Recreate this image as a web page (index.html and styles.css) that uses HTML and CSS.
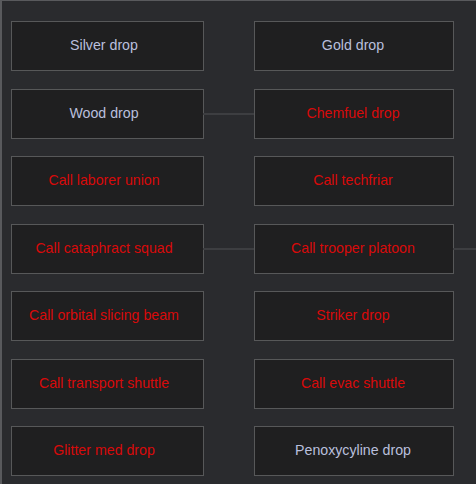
FILE: index.html
```html
<!DOCTYPE html>
<html>
<head>
<meta charset="utf-8">
<link rel="stylesheet" href="styles.css">
</head>
<body>
<div class="panel">
  <div class="grid">
    <div class="card silver">Silver drop</div>
    <div class="card silver">Gold drop</div>
    <div class="card silver join">Wood drop</div>
    <div class="card red">Chemfuel drop</div>
    <div class="card red">Call laborer union</div>
    <div class="card red">Call techfriar</div>
    <div class="card red join">Call cataphract squad</div>
    <div class="card red tail">Call trooper platoon</div>
    <div class="card red">Call orbital slicing beam</div>
    <div class="card red">Striker drop</div>
    <div class="card red">Call transport shuttle</div>
    <div class="card red">Call evac shuttle</div>
    <div class="card red">Glitter med drop</div>
    <div class="card silver">Penoxycyline drop</div>
  </div>
</div>
</body>
</html>
```
FILE: styles.css
```css
html, body {
  margin: 0;
  padding: 0;
  background: #2a2b2e;
}
.panel {
  width: 474px;
  height: 483px;
  border-left: 2px solid #595a5d;
  border-top: 1px solid #595a5d;
  background: #2a2b2e;
  overflow: hidden;
  font-family: "Liberation Sans", Arial, sans-serif;
}
.grid {
  display: grid;
  grid-template-columns: 193px 200px;
  grid-auto-rows: 50px;
  column-gap: 50px;
  row-gap: 17.5px;
  padding: 20px 0 0 9px;
}
.card {
  position: relative;
  box-sizing: border-box;
  background: #1f1f20;
  border: 1px solid #575859;
  display: flex;
  align-items: center;
  justify-content: center;
  font-size: 14.2px;
  white-space: nowrap;
  padding: 0 2px 2px 0;
}
.card:nth-child(odd) { padding-right: 7px; }
.silver { color: #b9bfdd; }
.red { color: #d80a0a; }
.join::after,
.tail::after {
  content: "";
  position: absolute;
  left: 100%;
  top: 50%;
  margin-top: -1px;
  height: 2px;
  background: #3d3e41;
}
.join::after { width: 51px; }
.tail::after { width: 30px; }
```
